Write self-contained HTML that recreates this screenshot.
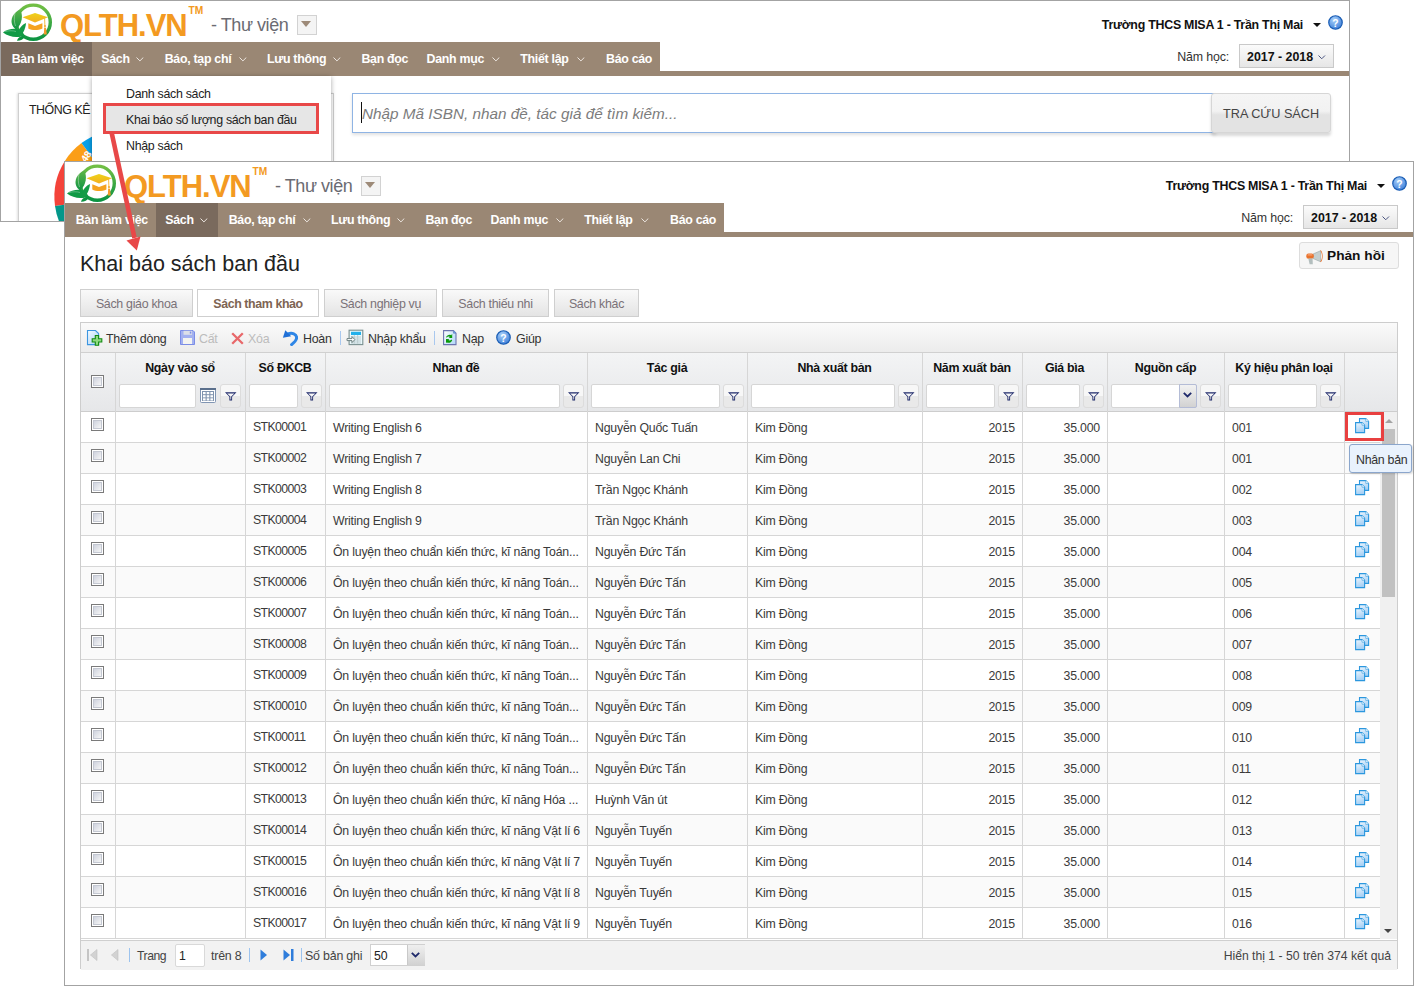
<!DOCTYPE html><html><head><meta charset="utf-8"><style>
html,body{margin:0;padding:0;background:#fff;width:1418px;height:991px;overflow:hidden;position:relative;font-family:'Liberation Sans', sans-serif}
div,span{box-sizing:content-box}
</style></head><body>
<div style="position:absolute;left:0;top:0;width:1348px;height:220px;border:1px solid #a3a3a3;background:#fff;overflow:hidden">
<div style="position:absolute;left:-1px;top:-1px;width:1350px;height:300px">
<svg width="60" height="45" viewBox="0 0 60 45" style="position:absolute;left:0;top:0">
<defs>
<linearGradient id="gr" x1="0" y1="0" x2="0" y2="1"><stop offset="0" stop-color="#72bf44"/><stop offset="1" stop-color="#0c9443"/></linearGradient>
<linearGradient id="gl" x1="0" y1="0" x2="0" y2="1"><stop offset="0" stop-color="#5db548"/><stop offset="1" stop-color="#0f9444"/></linearGradient>
<linearGradient id="gc" x1="0" y1="0" x2="0" y2="1"><stop offset="0" stop-color="#eed21a"/><stop offset="1" stop-color="#f4ae1e"/></linearGradient>
</defs>
<circle cx="33.25" cy="22.15" r="17.05" fill="none" stroke="url(#gr)" stroke-width="3.4"/>
<path d="M19.8 9.5 C 23.5 14, 22.5 24, 16 29.5 C 9.5 25, 9.5 15, 19.8 9.5 Z" fill="url(#gl)"/>
<path d="M3 32.5 C 8 28.5, 17 27.5, 22.5 31 L 24 35.5 C 17 38.5, 9 37, 3 32.5 Z" fill="#109a45"/>
<path d="M26 23 C 25.5 29, 23 34, 19 37 C 17 33, 19 26, 26 23 Z" fill="#139b46"/>
<path d="M17 40.8 C 17.5 37.5, 21 35.5, 25 36.5 C 23.5 39.5, 20 41, 17 40.8 Z" fill="#0c9240"/>
<path d="M15 13 C 14 17, 14 22, 15.5 26" stroke="#ffffff" stroke-opacity="0.7" stroke-width="0.5" fill="none"/>
<path d="M5 31.5 C 9 30.5, 13 30.5, 16 31.5" stroke="#ffffff" stroke-opacity="0.6" stroke-width="0.5" fill="none"/>
<path d="M22.5 17.3 L35 13 L48 17.3 L35 22.5 Z" fill="url(#gc)"/>
<path d="M28.3 23.2 L35 26 L42.4 23.2 L42.4 28.5 C 38 30.5, 32 30.5, 28.3 28.5 Z" fill="#f5a21f"/>
<path d="M44.6 18 L45 29" stroke="#f2b431" stroke-width="0.9"/>
<circle cx="45" cy="26" r="0.9" fill="#f2a42a"/>
<path d="M44.2 28 L46 28 L46.8 34.5 L43.8 34.5 Z" fill="#f39a2a"/>
</svg>
<div style="position:absolute;left:60px;top:9.7px;font:bold 31px/31px 'Liberation Sans', sans-serif;color:#f39a22;letter-spacing:-1px">QLTH.VN</div>
<div style="position:absolute;left:188.5px;top:6px;font:bold 10.2px/10px 'Liberation Sans', sans-serif;color:#f39a22">TM</div>
<div style="position:absolute;left:211px;top:17px;font:18px/17px 'Liberation Sans', sans-serif;color:#6b6b72;letter-spacing:-0.45px;white-space:nowrap">- Thư viện</div>
<div style="position:absolute;left:297px;top:15px;width:18px;height:18px;border:1px solid #d2d2d2;background:#f4f4f4"></div>
<div style="position:absolute;left:301px;top:21px;width:0;height:0;border-left:5.7px solid transparent;border-right:5.7px solid transparent;border-top:6.5px solid #9d8a78"></div>
<div style="position:absolute;right:47px;top:19px;font:bold 12.4px/12px 'Liberation Sans', sans-serif;color:#111;letter-spacing:-0.25px;white-space:nowrap">Trường THCS MISA 1 - Trần Thị Mai</div>
<div style="position:absolute;left:1313px;top:23px;width:0;height:0;border-left:4px solid transparent;border-right:4px solid transparent;border-top:4px solid #111"></div>
<svg width="15" height="15" viewBox="0 0 16 16" style="position:absolute;left:1328px;top:15px">
<defs><radialGradient id="hg132815" cx="0.4" cy="0.3" r="0.8"><stop offset="0" stop-color="#a8d0fa"/><stop offset="1" stop-color="#3478d6"/></radialGradient></defs>
<circle cx="8" cy="8" r="7.2" fill="url(#hg132815)" stroke="#1a5db4" stroke-width="1.3"/>
<text x="8" y="12.3" text-anchor="middle" font-family="Liberation Sans" font-weight="bold" font-size="11" fill="#fff">?</text>
</svg>
<div style="position:absolute;right:121px;top:51px;font:12.4px/12px 'Liberation Sans', sans-serif;color:#333;white-space:nowrap;letter-spacing:-0.15px">Năm học:</div>
<div style="position:absolute;left:1239px;top:44px;width:93px;height:22px;border:1px solid #c9c9c9;background:linear-gradient(#fbfbfb,#e6e6e6)"></div>
<div style="position:absolute;left:1247px;top:51px;font:bold 12.4px/12px 'Liberation Sans', sans-serif;color:#111;white-space:nowrap">2017 - 2018</div>
<svg width="8" height="5" style="position:absolute;left:1318px;top:55px"><path d="M0.5 0.5 L3.75 3.75 L7 0.5" fill="none" stroke="#4a5580" stroke-width="1"/></svg>
<div style="position:absolute;left:1px;top:71px;width:1348px;height:5px;background:#9a8774"></div>
<div style="position:absolute;left:1px;top:42px;width:659px;height:34px;background:#9a8774"></div>
<div style="position:absolute;left:1px;top:42px;width:91px;height:34px;background:#7a6a5d"></div>
<div style="position:absolute;left:11.7px;top:53px;font:bold 12.4px/12px 'Liberation Sans', sans-serif;color:#fff;letter-spacing:-0.3px;white-space:nowrap">Bàn làm việc</div>
<div style="position:absolute;left:101.3px;top:53px;font:bold 12.4px/12px 'Liberation Sans', sans-serif;color:#fff;letter-spacing:-0.3px;white-space:nowrap">Sách</div>
<svg width="8" height="5" style="position:absolute;left:136px;top:57px"><path d="M0.5 0.5 L3.9 3.9 L7.3 0.5" fill="none" stroke="#ece6e0" stroke-width="1"/></svg>
<div style="position:absolute;left:164.7px;top:53px;font:bold 12.4px/12px 'Liberation Sans', sans-serif;color:#fff;letter-spacing:-0.3px;white-space:nowrap">Báo, tạp chí</div>
<svg width="8" height="5" style="position:absolute;left:238.7px;top:57px"><path d="M0.5 0.5 L3.9 3.9 L7.3 0.5" fill="none" stroke="#ece6e0" stroke-width="1"/></svg>
<div style="position:absolute;left:267px;top:53px;font:bold 12.4px/12px 'Liberation Sans', sans-serif;color:#fff;letter-spacing:-0.3px;white-space:nowrap">Lưu thông</div>
<svg width="8" height="5" style="position:absolute;left:333px;top:57px"><path d="M0.5 0.5 L3.9 3.9 L7.3 0.5" fill="none" stroke="#ece6e0" stroke-width="1"/></svg>
<div style="position:absolute;left:361.4px;top:53px;font:bold 12.4px/12px 'Liberation Sans', sans-serif;color:#fff;letter-spacing:-0.3px;white-space:nowrap">Bạn đọc</div>
<div style="position:absolute;left:426.6px;top:53px;font:bold 12.4px/12px 'Liberation Sans', sans-serif;color:#fff;letter-spacing:-0.3px;white-space:nowrap">Danh mục</div>
<svg width="8" height="5" style="position:absolute;left:492px;top:57px"><path d="M0.5 0.5 L3.9 3.9 L7.3 0.5" fill="none" stroke="#ece6e0" stroke-width="1"/></svg>
<div style="position:absolute;left:520.3px;top:53px;font:bold 12.4px/12px 'Liberation Sans', sans-serif;color:#fff;letter-spacing:-0.3px;white-space:nowrap">Thiết lập</div>
<svg width="8" height="5" style="position:absolute;left:577px;top:57px"><path d="M0.5 0.5 L3.9 3.9 L7.3 0.5" fill="none" stroke="#ece6e0" stroke-width="1"/></svg>
<div style="position:absolute;left:606px;top:53px;font:bold 12.4px/12px 'Liberation Sans', sans-serif;color:#fff;letter-spacing:-0.3px;white-space:nowrap">Báo cáo</div>
<div style="position:absolute;left:18px;top:93px;width:314px;height:200px;border:1px solid #cfcfcf;box-shadow:-1px 0 2px rgba(0,0,0,0.12)"></div>
<div style="position:absolute;left:29px;top:104px;font:12.4px/12px 'Liberation Sans', sans-serif;color:#222;letter-spacing:-0.45px;white-space:nowrap">THỐNG KÊ</div>
<svg width="400" height="300" style="position:absolute;left:0;top:0"><path d="M121.3 196.9 L55.02 205.98 A66.9 66.9 0 0 1 64.88 160.95 Z" fill="#f4433a"/><path d="M121.3 196.9 L64.88 160.95 A66.9 66.9 0 0 1 81.51 143.12 Z" fill="#fb9e17"/><path d="M121.3 196.9 L81.51 143.12 A66.9 66.9 0 0 1 172.55 153.90 Z" fill="#08a0e8"/><path d="M121.3 196.9 L109.68 262.78 A66.9 66.9 0 0 1 55.02 205.98 Z" fill="#03978a"/><text x="0" y="0" transform="translate(86 163) rotate(-56)" font-family="Liberation Sans" font-weight="bold" font-size="10" fill="#fff">48</text></svg>
<div style="position:absolute;left:92px;top:76px;width:239px;height:150px;background:#fff;box-shadow:0 1px 5px rgba(0,0,0,0.35)"></div>
<div style="position:absolute;left:126px;top:88px;font:12.4px/12px 'Liberation Sans', sans-serif;color:#222;letter-spacing:-0.3px;white-space:nowrap">Danh sách sách</div>
<div style="position:absolute;left:103px;top:103px;width:210px;height:25px;border:3px solid #e84848;background:#e6e6e6"></div>
<div style="position:absolute;left:126px;top:114px;font:12.4px/12px 'Liberation Sans', sans-serif;color:#222;letter-spacing:-0.3px;white-space:nowrap">Khai báo số lượng sách ban đầu</div>
<div style="position:absolute;left:126px;top:140px;font:12.4px/12px 'Liberation Sans', sans-serif;color:#222;letter-spacing:-0.3px;white-space:nowrap">Nhập sách</div>
<div style="position:absolute;left:352px;top:93px;width:862px;height:38px;border:1px solid #8fb4e4;background:#fff;box-shadow:0 2px 3px rgba(0,0,0,0.12)"></div>
<div style="position:absolute;left:361px;top:102px;width:1px;height:21px;background:#111"></div>
<div style="position:absolute;left:362px;top:106px;font:italic 15.3px/16px 'Liberation Sans', sans-serif;color:#7c7c7c;white-space:nowrap">Nhập Mã ISBN, nhan đề, tác giả để tìm kiếm...</div>
<div style="position:absolute;left:1211px;top:93px;width:118px;height:38px;border:1px solid #d6d6d6;border-radius:3px;background:linear-gradient(#f5f5f5 0,#f2f2f2 45%,#e3e3e3 55%,#e3e3e3 100%);box-shadow:0 3px 3px rgba(0,0,0,0.15)"></div>
<div style="position:absolute;left:1223px;top:107px;font:12.7px/14px 'Liberation Sans', sans-serif;color:#444;white-space:nowrap">TRA CỨU SÁCH</div>
</div></div>
<div style="position:absolute;left:64px;top:161px;width:1348px;height:823px;border:1px solid #a3a3a3;background:#fff;overflow:hidden">
<div style="position:absolute;left:-1px;top:-1px;width:1350px;height:826px">
<svg width="60" height="45" viewBox="0 0 60 45" style="position:absolute;left:0;top:0">
<defs>
<linearGradient id="gr" x1="0" y1="0" x2="0" y2="1"><stop offset="0" stop-color="#72bf44"/><stop offset="1" stop-color="#0c9443"/></linearGradient>
<linearGradient id="gl" x1="0" y1="0" x2="0" y2="1"><stop offset="0" stop-color="#5db548"/><stop offset="1" stop-color="#0f9444"/></linearGradient>
<linearGradient id="gc" x1="0" y1="0" x2="0" y2="1"><stop offset="0" stop-color="#eed21a"/><stop offset="1" stop-color="#f4ae1e"/></linearGradient>
</defs>
<circle cx="33.25" cy="22.15" r="17.05" fill="none" stroke="url(#gr)" stroke-width="3.4"/>
<path d="M19.8 9.5 C 23.5 14, 22.5 24, 16 29.5 C 9.5 25, 9.5 15, 19.8 9.5 Z" fill="url(#gl)"/>
<path d="M3 32.5 C 8 28.5, 17 27.5, 22.5 31 L 24 35.5 C 17 38.5, 9 37, 3 32.5 Z" fill="#109a45"/>
<path d="M26 23 C 25.5 29, 23 34, 19 37 C 17 33, 19 26, 26 23 Z" fill="#139b46"/>
<path d="M17 40.8 C 17.5 37.5, 21 35.5, 25 36.5 C 23.5 39.5, 20 41, 17 40.8 Z" fill="#0c9240"/>
<path d="M15 13 C 14 17, 14 22, 15.5 26" stroke="#ffffff" stroke-opacity="0.7" stroke-width="0.5" fill="none"/>
<path d="M5 31.5 C 9 30.5, 13 30.5, 16 31.5" stroke="#ffffff" stroke-opacity="0.6" stroke-width="0.5" fill="none"/>
<path d="M22.5 17.3 L35 13 L48 17.3 L35 22.5 Z" fill="url(#gc)"/>
<path d="M28.3 23.2 L35 26 L42.4 23.2 L42.4 28.5 C 38 30.5, 32 30.5, 28.3 28.5 Z" fill="#f5a21f"/>
<path d="M44.6 18 L45 29" stroke="#f2b431" stroke-width="0.9"/>
<circle cx="45" cy="26" r="0.9" fill="#f2a42a"/>
<path d="M44.2 28 L46 28 L46.8 34.5 L43.8 34.5 Z" fill="#f39a2a"/>
</svg>
<div style="position:absolute;left:60px;top:9.7px;font:bold 31px/31px 'Liberation Sans', sans-serif;color:#f39a22;letter-spacing:-1px">QLTH.VN</div>
<div style="position:absolute;left:188.5px;top:6px;font:bold 10.2px/10px 'Liberation Sans', sans-serif;color:#f39a22">TM</div>
<div style="position:absolute;left:211px;top:17px;font:18px/17px 'Liberation Sans', sans-serif;color:#6b6b72;letter-spacing:-0.45px;white-space:nowrap">- Thư viện</div>
<div style="position:absolute;left:297px;top:15px;width:18px;height:18px;border:1px solid #d2d2d2;background:#f4f4f4"></div>
<div style="position:absolute;left:301px;top:21px;width:0;height:0;border-left:5.7px solid transparent;border-right:5.7px solid transparent;border-top:6.5px solid #9d8a78"></div>
<div style="position:absolute;right:47px;top:19px;font:bold 12.4px/12px 'Liberation Sans', sans-serif;color:#111;letter-spacing:-0.25px;white-space:nowrap">Trường THCS MISA 1 - Trần Thị Mai</div>
<div style="position:absolute;left:1313px;top:23px;width:0;height:0;border-left:4px solid transparent;border-right:4px solid transparent;border-top:4px solid #111"></div>
<svg width="15" height="15" viewBox="0 0 16 16" style="position:absolute;left:1328px;top:15px">
<defs><radialGradient id="hg132815" cx="0.4" cy="0.3" r="0.8"><stop offset="0" stop-color="#a8d0fa"/><stop offset="1" stop-color="#3478d6"/></radialGradient></defs>
<circle cx="8" cy="8" r="7.2" fill="url(#hg132815)" stroke="#1a5db4" stroke-width="1.3"/>
<text x="8" y="12.3" text-anchor="middle" font-family="Liberation Sans" font-weight="bold" font-size="11" fill="#fff">?</text>
</svg>
<div style="position:absolute;right:121px;top:51px;font:12.4px/12px 'Liberation Sans', sans-serif;color:#333;white-space:nowrap;letter-spacing:-0.15px">Năm học:</div>
<div style="position:absolute;left:1239px;top:44px;width:93px;height:22px;border:1px solid #c9c9c9;background:linear-gradient(#fbfbfb,#e6e6e6)"></div>
<div style="position:absolute;left:1247px;top:51px;font:bold 12.4px/12px 'Liberation Sans', sans-serif;color:#111;white-space:nowrap">2017 - 2018</div>
<svg width="8" height="5" style="position:absolute;left:1318px;top:55px"><path d="M0.5 0.5 L3.75 3.75 L7 0.5" fill="none" stroke="#4a5580" stroke-width="1"/></svg>
<div style="position:absolute;left:1px;top:71px;width:1348px;height:5px;background:#9a8774"></div>
<div style="position:absolute;left:1px;top:42px;width:659px;height:34px;background:#9a8774"></div>
<div style="position:absolute;left:92px;top:42px;width:62px;height:34px;background:#7a6a5d"></div>
<div style="position:absolute;left:11.7px;top:53px;font:bold 12.4px/12px 'Liberation Sans', sans-serif;color:#fff;letter-spacing:-0.3px;white-space:nowrap">Bàn làm việc</div>
<div style="position:absolute;left:101.3px;top:53px;font:bold 12.4px/12px 'Liberation Sans', sans-serif;color:#fff;letter-spacing:-0.3px;white-space:nowrap">Sách</div>
<svg width="8" height="5" style="position:absolute;left:136px;top:57px"><path d="M0.5 0.5 L3.9 3.9 L7.3 0.5" fill="none" stroke="#ece6e0" stroke-width="1"/></svg>
<div style="position:absolute;left:164.7px;top:53px;font:bold 12.4px/12px 'Liberation Sans', sans-serif;color:#fff;letter-spacing:-0.3px;white-space:nowrap">Báo, tạp chí</div>
<svg width="8" height="5" style="position:absolute;left:238.7px;top:57px"><path d="M0.5 0.5 L3.9 3.9 L7.3 0.5" fill="none" stroke="#ece6e0" stroke-width="1"/></svg>
<div style="position:absolute;left:267px;top:53px;font:bold 12.4px/12px 'Liberation Sans', sans-serif;color:#fff;letter-spacing:-0.3px;white-space:nowrap">Lưu thông</div>
<svg width="8" height="5" style="position:absolute;left:333px;top:57px"><path d="M0.5 0.5 L3.9 3.9 L7.3 0.5" fill="none" stroke="#ece6e0" stroke-width="1"/></svg>
<div style="position:absolute;left:361.4px;top:53px;font:bold 12.4px/12px 'Liberation Sans', sans-serif;color:#fff;letter-spacing:-0.3px;white-space:nowrap">Bạn đọc</div>
<div style="position:absolute;left:426.6px;top:53px;font:bold 12.4px/12px 'Liberation Sans', sans-serif;color:#fff;letter-spacing:-0.3px;white-space:nowrap">Danh mục</div>
<svg width="8" height="5" style="position:absolute;left:492px;top:57px"><path d="M0.5 0.5 L3.9 3.9 L7.3 0.5" fill="none" stroke="#ece6e0" stroke-width="1"/></svg>
<div style="position:absolute;left:520.3px;top:53px;font:bold 12.4px/12px 'Liberation Sans', sans-serif;color:#fff;letter-spacing:-0.3px;white-space:nowrap">Thiết lập</div>
<svg width="8" height="5" style="position:absolute;left:577px;top:57px"><path d="M0.5 0.5 L3.9 3.9 L7.3 0.5" fill="none" stroke="#ece6e0" stroke-width="1"/></svg>
<div style="position:absolute;left:606px;top:53px;font:bold 12.4px/12px 'Liberation Sans', sans-serif;color:#fff;letter-spacing:-0.3px;white-space:nowrap">Báo cáo</div>
</div></div>
<div style="position:absolute;left:80px;top:254px;font:21.5px/21px 'Liberation Sans', sans-serif;color:#222;white-space:nowrap">Khai báo sách ban đầu</div>
<div style="position:absolute;left:1299px;top:242px;width:98px;height:25px;border:1px solid #dddddd;border-radius:3px;background:#f6f6f6"></div>
<svg width="17" height="15" viewBox="0 0 17 15" style="position:absolute;left:1306px;top:250px">
<path d="M7 4 L14.5 0.8 L14.5 11.7 L7 8.5 Z" fill="#c5cfcf" stroke="#98a6a6" stroke-width="0.6"/>
<path d="M14 0.6 C16.6 2.5, 16.6 10, 14 11.9 L15 11.9 C17.2 10, 17.2 2.5, 15 0.6 Z" fill="#e8702a"/>
<rect x="0.3" y="3.6" width="7.5" height="5.2" rx="2.2" fill="#e9722c"/>
<rect x="1.5" y="4.2" width="5" height="1.4" rx="0.7" fill="#f7a272"/>
<path d="M2.3 8.4 L3.6 14.2 L6.8 14.2 L6.6 8.4 Z" fill="#b3bebe"/>
</svg>
<div style="position:absolute;left:1327px;top:249px;font:bold 13.7px/14px 'Liberation Sans', sans-serif;color:#111;white-space:nowrap">Phản hồi</div>
<div style="position:absolute;left:80px;top:289px;width:111px;height:26px;border:1px solid #cfcfcf;background:linear-gradient(#f9f9f9,#e4e4e4)"></div>
<div style="position:absolute;left:80px;width:113px;top:298px;text-align:center;font:12.4px/12px 'Liberation Sans', sans-serif;color:#7a7278;letter-spacing:-0.3px;white-space:nowrap">Sách giáo khoa</div>
<div style="position:absolute;left:197px;top:289px;width:120px;height:26px;border:1px solid #cfcfcf;background:#fff"></div>
<div style="position:absolute;left:197px;width:122px;top:298px;text-align:center;font:bold 12.4px/12px 'Liberation Sans', sans-serif;color:#7d6453;letter-spacing:-0.4px;white-space:nowrap">Sách tham khảo</div>
<div style="position:absolute;left:324px;top:289px;width:111px;height:26px;border:1px solid #cfcfcf;background:linear-gradient(#f9f9f9,#e4e4e4)"></div>
<div style="position:absolute;left:324px;width:113px;top:298px;text-align:center;font:12.4px/12px 'Liberation Sans', sans-serif;color:#7a7278;letter-spacing:-0.3px;white-space:nowrap">Sách nghiệp vụ</div>
<div style="position:absolute;left:442px;top:289px;width:105px;height:26px;border:1px solid #cfcfcf;background:linear-gradient(#f9f9f9,#e4e4e4)"></div>
<div style="position:absolute;left:442px;width:107px;top:298px;text-align:center;font:12.4px/12px 'Liberation Sans', sans-serif;color:#7a7278;letter-spacing:-0.3px;white-space:nowrap">Sách thiếu nhi</div>
<div style="position:absolute;left:554px;top:289px;width:83px;height:26px;border:1px solid #cfcfcf;background:linear-gradient(#f9f9f9,#e4e4e4)"></div>
<div style="position:absolute;left:554px;width:85px;top:298px;text-align:center;font:12.4px/12px 'Liberation Sans', sans-serif;color:#7a7278;letter-spacing:-0.3px;white-space:nowrap">Sách khác</div>
<div style="position:absolute;left:80px;top:322px;width:1316px;height:646px;border:1px solid #cdcdcd;border-bottom:none;background:#fff"></div>
<div style="position:absolute;left:81px;top:323px;width:1316px;height:29px;background:linear-gradient(#fafafa,#ececec);border-bottom:1px solid #d0d0d0"></div>
<svg width="22" height="22" viewBox="0 0 22 22" style="position:absolute;left:84px;top:326px">
<defs><linearGradient id="pg1" x1="0" y1="0" x2="1" y2="1"><stop offset="0" stop-color="#f4fbff"/><stop offset="1" stop-color="#a9d2f6"/></linearGradient></defs>
<path d="M3.5 4.5 H11.5 L14.6 7.6 V18.6 H3.5 Z" fill="url(#pg1)" stroke="#3d96e0" stroke-width="1.1"/>
<path d="M11.3 9.5 H14.6 V12.8 H17.8 V16 H14.6 V19.2 H11.3 V16 H8.2 V12.8 H11.3 Z" fill="#8edb80" stroke="#138a13" stroke-width="1.1"/>
</svg>
<div style="position:absolute;left:106px;top:333px;font:12.4px/12px 'Liberation Sans', sans-serif;color:#333;letter-spacing:-0.25px;white-space:nowrap">Thêm dòng</div>
<svg width="16" height="16" viewBox="0 0 16 16" style="position:absolute;left:180px;top:330px">
<path d="M0.5 0.5 H13 L14.5 2 V14.5 H0.5 Z" fill="#a3b1f0" stroke="#7b8de6" stroke-width="1"/>
<rect x="3.5" y="0.8" width="8.5" height="4" fill="#dcdfe8"/>
<rect x="9.8" y="1.6" width="1.5" height="2" fill="#7b8de6"/>
<rect x="3" y="8" width="9" height="6" fill="#f4f4f0"/>
</svg>
<div style="position:absolute;left:199px;top:333px;font:12.4px/12px 'Liberation Sans', sans-serif;color:#bcbcbc;letter-spacing:-0.25px;white-space:nowrap">Cất</div>
<svg width="13" height="13" style="position:absolute;left:231px;top:332px"><path d="M1.2 1.2 L11.8 11.8 M11.8 1.2 L1.2 11.8" stroke="#e8686a" stroke-width="2.3"/></svg>
<div style="position:absolute;left:248px;top:333px;font:12.4px/12px 'Liberation Sans', sans-serif;color:#bcbcbc;letter-spacing:-0.25px;white-space:nowrap">Xóa</div>
<svg width="16" height="16" viewBox="0 0 16 16" style="position:absolute;left:282px;top:330px"><path d="M5.5 4.2 C 10 2.2, 14.8 4, 14.6 8 C 14.4 10.5, 12 12.6, 9.6 14.6" fill="none" stroke="#2f86e6" stroke-width="3" stroke-linecap="round"/><path d="M3.3 0.3 L0.9 7.8 L9.2 6.3 Z" fill="#1f6fd6"/></svg>
<div style="position:absolute;left:303px;top:333px;font:12.4px/12px 'Liberation Sans', sans-serif;color:#333;letter-spacing:-0.25px;white-space:nowrap">Hoàn</div>
<div style="position:absolute;left:340px;top:331px;width:1px;height:14px;background:#a9c8ee"></div>
<svg width="22" height="22" viewBox="0 0 22 22" style="position:absolute;left:344px;top:326px">
<rect x="5.1" y="4.2" width="13.7" height="14.4" fill="#eaf8fb" stroke="#7a9090" stroke-width="1.1"/>
<rect x="7" y="5.8" width="10" height="3.2" fill="#22b0ea"/>
<path d="M7 11 H17 M7 13 H17 M7 15 H17 M7 17 H17 M10.3 9 V17.5 M13.7 9 V17.5" stroke="#b8c8cc" stroke-width="0.9"/>
<path d="M3 12.6 H8 V10.6 L10.8 13.6 L8 16.6 V14.6 H3 Z" fill="#ffffff" stroke="#6e8282" stroke-width="1"/>
</svg>
<div style="position:absolute;left:368px;top:333px;font:12.4px/12px 'Liberation Sans', sans-serif;color:#333;letter-spacing:-0.25px;white-space:nowrap">Nhập khẩu</div>
<div style="position:absolute;left:434px;top:331px;width:1px;height:14px;background:#a9c8ee"></div>
<svg width="22" height="22" viewBox="0 0 22 22" style="position:absolute;left:440px;top:326px">
<defs><linearGradient id="pg2" x1="0" y1="0" x2="1" y2="0.6"><stop offset="0" stop-color="#ffffff"/><stop offset="1" stop-color="#b9dcf8"/></linearGradient></defs>
<path d="M3.6 4.6 H13.4 L16 7.2 V18.6 H3.6 Z" fill="url(#pg2)" stroke="#6b74b0" stroke-width="1.1"/>
<path d="M13.4 4.6 V7.2 H16" fill="#58a8ee" stroke="#6b74b0" stroke-width="0.6"/>
<path d="M6 11.3 C 6.8 8.8, 10 8, 11.6 9.2 L11.8 8 H12.2 V12 H8.8 L9.8 11 C 9 10.3, 7.4 10.4, 6.8 11.6 Z" fill="#0a9a0a"/>
<path d="M12.2 14.2 C 11.5 16.6, 8.4 17.4, 6.6 16.2 L6.4 17 H6 V13 H9.4 L8.4 14 C 9.2 14.8, 10.8 14.6, 11.4 13.6 Z" fill="#0a9a0a"/>
</svg>
<div style="position:absolute;left:462px;top:333px;font:12.4px/12px 'Liberation Sans', sans-serif;color:#333;letter-spacing:-0.25px;white-space:nowrap">Nạp</div>
<svg width="15" height="15" viewBox="0 0 16 16" style="position:absolute;left:496px;top:330px">
<defs><radialGradient id="hg496330" cx="0.4" cy="0.3" r="0.8"><stop offset="0" stop-color="#a8d0fa"/><stop offset="1" stop-color="#3478d6"/></radialGradient></defs>
<circle cx="8" cy="8" r="7.2" fill="url(#hg496330)" stroke="#1a5db4" stroke-width="1.3"/>
<text x="8" y="12.3" text-anchor="middle" font-family="Liberation Sans" font-weight="bold" font-size="11" fill="#fff">?</text>
</svg>
<div style="position:absolute;left:516px;top:333px;font:12.4px/12px 'Liberation Sans', sans-serif;color:#333;letter-spacing:-0.25px;white-space:nowrap">Giúp</div>
<div style="position:absolute;left:81px;top:353px;width:1316px;height:58px;background:linear-gradient(#f3f4f5,#e6e7e9);border-bottom:1px solid #cdcdcd"></div>
<div style="position:absolute;left:115px;width:130px;top:362px;text-align:center;font:bold 12.4px/12px 'Liberation Sans', sans-serif;color:#111;letter-spacing:-0.3px;white-space:nowrap">Ngày vào sổ</div>
<div style="position:absolute;left:245px;width:80px;top:362px;text-align:center;font:bold 12.4px/12px 'Liberation Sans', sans-serif;color:#111;letter-spacing:-0.3px;white-space:nowrap">Số ĐKCB</div>
<div style="position:absolute;left:325px;width:262px;top:362px;text-align:center;font:bold 12.4px/12px 'Liberation Sans', sans-serif;color:#111;letter-spacing:-0.3px;white-space:nowrap">Nhan đề</div>
<div style="position:absolute;left:587px;width:160px;top:362px;text-align:center;font:bold 12.4px/12px 'Liberation Sans', sans-serif;color:#111;letter-spacing:-0.3px;white-space:nowrap">Tác giả</div>
<div style="position:absolute;left:747px;width:175px;top:362px;text-align:center;font:bold 12.4px/12px 'Liberation Sans', sans-serif;color:#111;letter-spacing:-0.3px;white-space:nowrap">Nhà xuất bản</div>
<div style="position:absolute;left:922px;width:100px;top:362px;text-align:center;font:bold 12.4px/12px 'Liberation Sans', sans-serif;color:#111;letter-spacing:-0.3px;white-space:nowrap">Năm xuất bản</div>
<div style="position:absolute;left:1022px;width:85px;top:362px;text-align:center;font:bold 12.4px/12px 'Liberation Sans', sans-serif;color:#111;letter-spacing:-0.3px;white-space:nowrap">Giá bìa</div>
<div style="position:absolute;left:1107px;width:117px;top:362px;text-align:center;font:bold 12.4px/12px 'Liberation Sans', sans-serif;color:#111;letter-spacing:-0.3px;white-space:nowrap">Nguồn cấp</div>
<div style="position:absolute;left:1224px;width:120px;top:362px;text-align:center;font:bold 12.4px/12px 'Liberation Sans', sans-serif;color:#111;letter-spacing:-0.3px;white-space:nowrap">Ký hiệu phân loại</div>
<div style="position:absolute;left:115px;top:353px;width:1px;height:585px;background:#d6d6d6"></div>
<div style="position:absolute;left:245px;top:353px;width:1px;height:585px;background:#d6d6d6"></div>
<div style="position:absolute;left:325px;top:353px;width:1px;height:585px;background:#d6d6d6"></div>
<div style="position:absolute;left:587px;top:353px;width:1px;height:585px;background:#d6d6d6"></div>
<div style="position:absolute;left:747px;top:353px;width:1px;height:585px;background:#d6d6d6"></div>
<div style="position:absolute;left:922px;top:353px;width:1px;height:585px;background:#d6d6d6"></div>
<div style="position:absolute;left:1022px;top:353px;width:1px;height:585px;background:#d6d6d6"></div>
<div style="position:absolute;left:1107px;top:353px;width:1px;height:585px;background:#d6d6d6"></div>
<div style="position:absolute;left:1224px;top:353px;width:1px;height:585px;background:#d6d6d6"></div>
<div style="position:absolute;left:1344px;top:353px;width:1px;height:585px;background:#d6d6d6"></div>
<div style="position:absolute;left:91px;top:375px;width:11px;height:11px;border:1px solid #7a7a7a;background:#fff"><div style="position:absolute;left:1px;top:1px;width:7px;height:7px;border:1px solid #c4c8d2;background:linear-gradient(135deg,#cfd3de,#f6f6f6)"></div></div>
<div style="position:absolute;left:119px;top:384px;width:75px;height:22px;border:1px solid #d6d6d6;border-radius:2px;background:#fff"></div>
<svg width="16" height="15" viewBox="0 0 16 15" style="position:absolute;left:200px;top:388px"><rect x="0.5" y="0.5" width="15" height="14" rx="1" fill="#fff" stroke="#8095b3"/><rect x="0" y="0" width="16" height="2" fill="#5a6f8c"/><rect x="2" y="3" width="12" height="10" fill="#7f93ae"/><g fill="#fff"><rect x="3" y="4" width="2.6" height="2.2"/><rect x="6.7" y="4" width="2.6" height="2.2"/><rect x="10.4" y="4" width="2.6" height="2.2"/><rect x="3" y="7.2" width="2.6" height="2.2"/><rect x="6.7" y="7.2" width="2.6" height="2.2"/><rect x="10.4" y="7.2" width="2.6" height="2.2"/><rect x="3" y="10.3" width="2.6" height="2.2"/><rect x="6.7" y="10.3" width="2.6" height="2.2"/><rect x="10.4" y="10.3" width="2.6" height="2.2"/></g></svg>
<div style="position:absolute;left:220px;top:384px;width:19px;height:22px;border:1px solid #dcdcdc;border-radius:3px;background:linear-gradient(#f7f7f7 0,#f7f7f7 50%,#e9e9e9 50%,#e9e9e9 100%)"></div>
<svg width="12" height="10" viewBox="0 0 12 10" style="position:absolute;left:225px;top:391.6px"><path d="M0 0.3 H11.5 L7.1 4.8 V8.6 H4.4 V4.8 Z M2.1 1.4 L5.3 4.4 V7.5 H6.2 V4.4 L9.4 1.4 Z" fill="#1f2a6b" fill-rule="evenodd"/></svg>
<div style="position:absolute;left:249px;top:384px;width:47px;height:22px;border:1px solid #d6d6d6;border-radius:2px;background:#fff"></div>
<div style="position:absolute;left:301px;top:384px;width:19px;height:22px;border:1px solid #dcdcdc;border-radius:3px;background:linear-gradient(#f7f7f7 0,#f7f7f7 50%,#e9e9e9 50%,#e9e9e9 100%)"></div>
<svg width="12" height="10" viewBox="0 0 12 10" style="position:absolute;left:306px;top:391.6px"><path d="M0 0.3 H11.5 L7.1 4.8 V8.6 H4.4 V4.8 Z M2.1 1.4 L5.3 4.4 V7.5 H6.2 V4.4 L9.4 1.4 Z" fill="#1f2a6b" fill-rule="evenodd"/></svg>
<div style="position:absolute;left:329px;top:384px;width:229px;height:22px;border:1px solid #d6d6d6;border-radius:2px;background:#fff"></div>
<div style="position:absolute;left:563px;top:384px;width:19px;height:22px;border:1px solid #dcdcdc;border-radius:3px;background:linear-gradient(#f7f7f7 0,#f7f7f7 50%,#e9e9e9 50%,#e9e9e9 100%)"></div>
<svg width="12" height="10" viewBox="0 0 12 10" style="position:absolute;left:568px;top:391.6px"><path d="M0 0.3 H11.5 L7.1 4.8 V8.6 H4.4 V4.8 Z M2.1 1.4 L5.3 4.4 V7.5 H6.2 V4.4 L9.4 1.4 Z" fill="#1f2a6b" fill-rule="evenodd"/></svg>
<div style="position:absolute;left:591px;top:384px;width:127px;height:22px;border:1px solid #d6d6d6;border-radius:2px;background:#fff"></div>
<div style="position:absolute;left:723px;top:384px;width:19px;height:22px;border:1px solid #dcdcdc;border-radius:3px;background:linear-gradient(#f7f7f7 0,#f7f7f7 50%,#e9e9e9 50%,#e9e9e9 100%)"></div>
<svg width="12" height="10" viewBox="0 0 12 10" style="position:absolute;left:728px;top:391.6px"><path d="M0 0.3 H11.5 L7.1 4.8 V8.6 H4.4 V4.8 Z M2.1 1.4 L5.3 4.4 V7.5 H6.2 V4.4 L9.4 1.4 Z" fill="#1f2a6b" fill-rule="evenodd"/></svg>
<div style="position:absolute;left:751px;top:384px;width:142px;height:22px;border:1px solid #d6d6d6;border-radius:2px;background:#fff"></div>
<div style="position:absolute;left:898px;top:384px;width:19px;height:22px;border:1px solid #dcdcdc;border-radius:3px;background:linear-gradient(#f7f7f7 0,#f7f7f7 50%,#e9e9e9 50%,#e9e9e9 100%)"></div>
<svg width="12" height="10" viewBox="0 0 12 10" style="position:absolute;left:903px;top:391.6px"><path d="M0 0.3 H11.5 L7.1 4.8 V8.6 H4.4 V4.8 Z M2.1 1.4 L5.3 4.4 V7.5 H6.2 V4.4 L9.4 1.4 Z" fill="#1f2a6b" fill-rule="evenodd"/></svg>
<div style="position:absolute;left:926px;top:384px;width:67px;height:22px;border:1px solid #d6d6d6;border-radius:2px;background:#fff"></div>
<div style="position:absolute;left:998px;top:384px;width:19px;height:22px;border:1px solid #dcdcdc;border-radius:3px;background:linear-gradient(#f7f7f7 0,#f7f7f7 50%,#e9e9e9 50%,#e9e9e9 100%)"></div>
<svg width="12" height="10" viewBox="0 0 12 10" style="position:absolute;left:1003px;top:391.6px"><path d="M0 0.3 H11.5 L7.1 4.8 V8.6 H4.4 V4.8 Z M2.1 1.4 L5.3 4.4 V7.5 H6.2 V4.4 L9.4 1.4 Z" fill="#1f2a6b" fill-rule="evenodd"/></svg>
<div style="position:absolute;left:1026px;top:384px;width:52px;height:22px;border:1px solid #d6d6d6;border-radius:2px;background:#fff"></div>
<div style="position:absolute;left:1083px;top:384px;width:19px;height:22px;border:1px solid #dcdcdc;border-radius:3px;background:linear-gradient(#f7f7f7 0,#f7f7f7 50%,#e9e9e9 50%,#e9e9e9 100%)"></div>
<svg width="12" height="10" viewBox="0 0 12 10" style="position:absolute;left:1088px;top:391.6px"><path d="M0 0.3 H11.5 L7.1 4.8 V8.6 H4.4 V4.8 Z M2.1 1.4 L5.3 4.4 V7.5 H6.2 V4.4 L9.4 1.4 Z" fill="#1f2a6b" fill-rule="evenodd"/></svg>
<div style="position:absolute;left:1111px;top:384px;width:84px;height:22px;border:1px solid #d6d6d6;border-radius:2px;background:#fff"></div>
<div style="position:absolute;left:1179px;top:384px;width:16px;height:22px;background:linear-gradient(#f2f2f2,#d2d2d2);border:1px solid #b4bcd6;border-radius:0 2px 2px 0"></div>
<svg width="9" height="6" style="position:absolute;left:1183px;top:392px"><path d="M0.8 0.8 L4.5 4.5 L8.2 0.8" fill="none" stroke="#1f2a6b" stroke-width="1.8"/></svg>
<div style="position:absolute;left:1200px;top:384px;width:19px;height:22px;border:1px solid #dcdcdc;border-radius:3px;background:linear-gradient(#f7f7f7 0,#f7f7f7 50%,#e9e9e9 50%,#e9e9e9 100%)"></div>
<svg width="12" height="10" viewBox="0 0 12 10" style="position:absolute;left:1205px;top:391.6px"><path d="M0 0.3 H11.5 L7.1 4.8 V8.6 H4.4 V4.8 Z M2.1 1.4 L5.3 4.4 V7.5 H6.2 V4.4 L9.4 1.4 Z" fill="#1f2a6b" fill-rule="evenodd"/></svg>
<div style="position:absolute;left:1228px;top:384px;width:87px;height:22px;border:1px solid #d6d6d6;border-radius:2px;background:#fff"></div>
<div style="position:absolute;left:1320px;top:384px;width:19px;height:22px;border:1px solid #dcdcdc;border-radius:3px;background:linear-gradient(#f7f7f7 0,#f7f7f7 50%,#e9e9e9 50%,#e9e9e9 100%)"></div>
<svg width="12" height="10" viewBox="0 0 12 10" style="position:absolute;left:1325px;top:391.6px"><path d="M0 0.3 H11.5 L7.1 4.8 V8.6 H4.4 V4.8 Z M2.1 1.4 L5.3 4.4 V7.5 H6.2 V4.4 L9.4 1.4 Z" fill="#1f2a6b" fill-rule="evenodd"/></svg>
<div style="position:absolute;left:81px;top:412px;width:1299px;height:527px;overflow:hidden">
<div style="position:absolute;left:0;top:0px;width:1299px;height:30px;background:#fff;border-bottom:1px solid #d6d6d6"></div>
<div style="position:absolute;left:0;top:31px;width:1299px;height:30px;background:#fafafa;border-bottom:1px solid #d6d6d6"></div>
<div style="position:absolute;left:0;top:62px;width:1299px;height:30px;background:#fff;border-bottom:1px solid #d6d6d6"></div>
<div style="position:absolute;left:0;top:93px;width:1299px;height:30px;background:#fafafa;border-bottom:1px solid #d6d6d6"></div>
<div style="position:absolute;left:0;top:124px;width:1299px;height:30px;background:#fff;border-bottom:1px solid #d6d6d6"></div>
<div style="position:absolute;left:0;top:155px;width:1299px;height:30px;background:#fafafa;border-bottom:1px solid #d6d6d6"></div>
<div style="position:absolute;left:0;top:186px;width:1299px;height:30px;background:#fff;border-bottom:1px solid #d6d6d6"></div>
<div style="position:absolute;left:0;top:217px;width:1299px;height:30px;background:#fafafa;border-bottom:1px solid #d6d6d6"></div>
<div style="position:absolute;left:0;top:248px;width:1299px;height:30px;background:#fff;border-bottom:1px solid #d6d6d6"></div>
<div style="position:absolute;left:0;top:279px;width:1299px;height:30px;background:#fafafa;border-bottom:1px solid #d6d6d6"></div>
<div style="position:absolute;left:0;top:310px;width:1299px;height:30px;background:#fff;border-bottom:1px solid #d6d6d6"></div>
<div style="position:absolute;left:0;top:341px;width:1299px;height:30px;background:#fafafa;border-bottom:1px solid #d6d6d6"></div>
<div style="position:absolute;left:0;top:372px;width:1299px;height:30px;background:#fff;border-bottom:1px solid #d6d6d6"></div>
<div style="position:absolute;left:0;top:403px;width:1299px;height:30px;background:#fafafa;border-bottom:1px solid #d6d6d6"></div>
<div style="position:absolute;left:0;top:434px;width:1299px;height:30px;background:#fff;border-bottom:1px solid #d6d6d6"></div>
<div style="position:absolute;left:0;top:465px;width:1299px;height:30px;background:#fafafa;border-bottom:1px solid #d6d6d6"></div>
<div style="position:absolute;left:0;top:496px;width:1299px;height:30px;background:#fff;border-bottom:1px solid #d6d6d6"></div>
</div>
<div style="position:absolute;left:115px;top:411px;width:1px;height:527px;background:#d6d6d6"></div>
<div style="position:absolute;left:245px;top:411px;width:1px;height:527px;background:#d6d6d6"></div>
<div style="position:absolute;left:325px;top:411px;width:1px;height:527px;background:#d6d6d6"></div>
<div style="position:absolute;left:587px;top:411px;width:1px;height:527px;background:#d6d6d6"></div>
<div style="position:absolute;left:747px;top:411px;width:1px;height:527px;background:#d6d6d6"></div>
<div style="position:absolute;left:922px;top:411px;width:1px;height:527px;background:#d6d6d6"></div>
<div style="position:absolute;left:1022px;top:411px;width:1px;height:527px;background:#d6d6d6"></div>
<div style="position:absolute;left:1107px;top:411px;width:1px;height:527px;background:#d6d6d6"></div>
<div style="position:absolute;left:1224px;top:411px;width:1px;height:527px;background:#d6d6d6"></div>
<div style="position:absolute;left:1344px;top:411px;width:1px;height:527px;background:#d6d6d6"></div>
<div style="position:absolute;left:91px;top:418px;width:11px;height:11px;border:1px solid #7a7a7a;background:#fff"><div style="position:absolute;left:1px;top:1px;width:7px;height:7px;border:1px solid #c4c8d2;background:linear-gradient(135deg,#cfd3de,#f6f6f6)"></div></div>
<div style="position:absolute;left:253px;top:421px;font:12.3px/12px 'Liberation Sans', sans-serif;color:#3a3a3a;white-space:nowrap;letter-spacing:-0.6px">STK00001</div>
<div style="position:absolute;left:333px;top:422px;font:12.3px/12px 'Liberation Sans', sans-serif;color:#3a3a3a;white-space:nowrap;letter-spacing:-0.2px">Writing English 6</div>
<div style="position:absolute;left:595px;top:422px;font:12.3px/12px 'Liberation Sans', sans-serif;color:#3a3a3a;white-space:nowrap;letter-spacing:-0.2px">Nguyễn Quốc Tuấn</div>
<div style="position:absolute;left:755px;top:422px;font:12.3px/12px 'Liberation Sans', sans-serif;color:#3a3a3a;white-space:nowrap;letter-spacing:-0.2px">Kim Đồng</div>
<div style="position:absolute;left:1232px;top:422px;font:12.3px/12px 'Liberation Sans', sans-serif;color:#3a3a3a;white-space:nowrap;letter-spacing:-0.2px">001</div>
<div style="position:absolute;right:403px;top:422px;font:12.3px/12px 'Liberation Sans', sans-serif;color:#3a3a3a;white-space:nowrap;letter-spacing:-0.2px">2015</div>
<div style="position:absolute;right:318px;top:422px;font:12.3px/12px 'Liberation Sans', sans-serif;color:#3a3a3a;white-space:nowrap;letter-spacing:-0.2px">35.000</div>
<svg width="15" height="16" viewBox="0 0 15 16" style="position:absolute;left:1355px;top:418px">
<defs><linearGradient id="cg" x1="0" y1="0" x2="0.3" y2="1"><stop offset="0" stop-color="#eef6fe"/><stop offset="1" stop-color="#a6d0f4"/></linearGradient></defs>
<path d="M4.5 0.6 H10.8 L13.6 3.4 V10.4 H4.5 Z" fill="url(#cg)" stroke="#2b97de" stroke-width="1.1"/>
<path d="M10.8 0.6 V3.4 H13.6" fill="#fff" stroke="#2b97de" stroke-width="0.6"/>
<path d="M0.6 4.6 H7 L9.6 7.2 V14.6 H0.6 Z" fill="url(#cg)" stroke="#2b97de" stroke-width="1.1"/>
<path d="M7 4.6 V7.2 H9.6" fill="#fff" stroke="#2b97de" stroke-width="0.6"/>
</svg>
<div style="position:absolute;left:91px;top:449px;width:11px;height:11px;border:1px solid #7a7a7a;background:#fff"><div style="position:absolute;left:1px;top:1px;width:7px;height:7px;border:1px solid #c4c8d2;background:linear-gradient(135deg,#cfd3de,#f6f6f6)"></div></div>
<div style="position:absolute;left:253px;top:452px;font:12.3px/12px 'Liberation Sans', sans-serif;color:#3a3a3a;white-space:nowrap;letter-spacing:-0.6px">STK00002</div>
<div style="position:absolute;left:333px;top:453px;font:12.3px/12px 'Liberation Sans', sans-serif;color:#3a3a3a;white-space:nowrap;letter-spacing:-0.2px">Writing English 7</div>
<div style="position:absolute;left:595px;top:453px;font:12.3px/12px 'Liberation Sans', sans-serif;color:#3a3a3a;white-space:nowrap;letter-spacing:-0.2px">Nguyễn Lan Chi</div>
<div style="position:absolute;left:755px;top:453px;font:12.3px/12px 'Liberation Sans', sans-serif;color:#3a3a3a;white-space:nowrap;letter-spacing:-0.2px">Kim Đồng</div>
<div style="position:absolute;left:1232px;top:453px;font:12.3px/12px 'Liberation Sans', sans-serif;color:#3a3a3a;white-space:nowrap;letter-spacing:-0.2px">001</div>
<div style="position:absolute;right:403px;top:453px;font:12.3px/12px 'Liberation Sans', sans-serif;color:#3a3a3a;white-space:nowrap;letter-spacing:-0.2px">2015</div>
<div style="position:absolute;right:318px;top:453px;font:12.3px/12px 'Liberation Sans', sans-serif;color:#3a3a3a;white-space:nowrap;letter-spacing:-0.2px">35.000</div>
<svg width="15" height="16" viewBox="0 0 15 16" style="position:absolute;left:1355px;top:449px">
<defs><linearGradient id="cg" x1="0" y1="0" x2="0.3" y2="1"><stop offset="0" stop-color="#eef6fe"/><stop offset="1" stop-color="#a6d0f4"/></linearGradient></defs>
<path d="M4.5 0.6 H10.8 L13.6 3.4 V10.4 H4.5 Z" fill="url(#cg)" stroke="#2b97de" stroke-width="1.1"/>
<path d="M10.8 0.6 V3.4 H13.6" fill="#fff" stroke="#2b97de" stroke-width="0.6"/>
<path d="M0.6 4.6 H7 L9.6 7.2 V14.6 H0.6 Z" fill="url(#cg)" stroke="#2b97de" stroke-width="1.1"/>
<path d="M7 4.6 V7.2 H9.6" fill="#fff" stroke="#2b97de" stroke-width="0.6"/>
</svg>
<div style="position:absolute;left:91px;top:480px;width:11px;height:11px;border:1px solid #7a7a7a;background:#fff"><div style="position:absolute;left:1px;top:1px;width:7px;height:7px;border:1px solid #c4c8d2;background:linear-gradient(135deg,#cfd3de,#f6f6f6)"></div></div>
<div style="position:absolute;left:253px;top:483px;font:12.3px/12px 'Liberation Sans', sans-serif;color:#3a3a3a;white-space:nowrap;letter-spacing:-0.6px">STK00003</div>
<div style="position:absolute;left:333px;top:484px;font:12.3px/12px 'Liberation Sans', sans-serif;color:#3a3a3a;white-space:nowrap;letter-spacing:-0.2px">Writing English 8</div>
<div style="position:absolute;left:595px;top:484px;font:12.3px/12px 'Liberation Sans', sans-serif;color:#3a3a3a;white-space:nowrap;letter-spacing:-0.2px">Trần Ngọc Khánh</div>
<div style="position:absolute;left:755px;top:484px;font:12.3px/12px 'Liberation Sans', sans-serif;color:#3a3a3a;white-space:nowrap;letter-spacing:-0.2px">Kim Đồng</div>
<div style="position:absolute;left:1232px;top:484px;font:12.3px/12px 'Liberation Sans', sans-serif;color:#3a3a3a;white-space:nowrap;letter-spacing:-0.2px">002</div>
<div style="position:absolute;right:403px;top:484px;font:12.3px/12px 'Liberation Sans', sans-serif;color:#3a3a3a;white-space:nowrap;letter-spacing:-0.2px">2015</div>
<div style="position:absolute;right:318px;top:484px;font:12.3px/12px 'Liberation Sans', sans-serif;color:#3a3a3a;white-space:nowrap;letter-spacing:-0.2px">35.000</div>
<svg width="15" height="16" viewBox="0 0 15 16" style="position:absolute;left:1355px;top:480px">
<defs><linearGradient id="cg" x1="0" y1="0" x2="0.3" y2="1"><stop offset="0" stop-color="#eef6fe"/><stop offset="1" stop-color="#a6d0f4"/></linearGradient></defs>
<path d="M4.5 0.6 H10.8 L13.6 3.4 V10.4 H4.5 Z" fill="url(#cg)" stroke="#2b97de" stroke-width="1.1"/>
<path d="M10.8 0.6 V3.4 H13.6" fill="#fff" stroke="#2b97de" stroke-width="0.6"/>
<path d="M0.6 4.6 H7 L9.6 7.2 V14.6 H0.6 Z" fill="url(#cg)" stroke="#2b97de" stroke-width="1.1"/>
<path d="M7 4.6 V7.2 H9.6" fill="#fff" stroke="#2b97de" stroke-width="0.6"/>
</svg>
<div style="position:absolute;left:91px;top:511px;width:11px;height:11px;border:1px solid #7a7a7a;background:#fff"><div style="position:absolute;left:1px;top:1px;width:7px;height:7px;border:1px solid #c4c8d2;background:linear-gradient(135deg,#cfd3de,#f6f6f6)"></div></div>
<div style="position:absolute;left:253px;top:514px;font:12.3px/12px 'Liberation Sans', sans-serif;color:#3a3a3a;white-space:nowrap;letter-spacing:-0.6px">STK00004</div>
<div style="position:absolute;left:333px;top:515px;font:12.3px/12px 'Liberation Sans', sans-serif;color:#3a3a3a;white-space:nowrap;letter-spacing:-0.2px">Writing English 9</div>
<div style="position:absolute;left:595px;top:515px;font:12.3px/12px 'Liberation Sans', sans-serif;color:#3a3a3a;white-space:nowrap;letter-spacing:-0.2px">Trần Ngọc Khánh</div>
<div style="position:absolute;left:755px;top:515px;font:12.3px/12px 'Liberation Sans', sans-serif;color:#3a3a3a;white-space:nowrap;letter-spacing:-0.2px">Kim Đồng</div>
<div style="position:absolute;left:1232px;top:515px;font:12.3px/12px 'Liberation Sans', sans-serif;color:#3a3a3a;white-space:nowrap;letter-spacing:-0.2px">003</div>
<div style="position:absolute;right:403px;top:515px;font:12.3px/12px 'Liberation Sans', sans-serif;color:#3a3a3a;white-space:nowrap;letter-spacing:-0.2px">2015</div>
<div style="position:absolute;right:318px;top:515px;font:12.3px/12px 'Liberation Sans', sans-serif;color:#3a3a3a;white-space:nowrap;letter-spacing:-0.2px">35.000</div>
<svg width="15" height="16" viewBox="0 0 15 16" style="position:absolute;left:1355px;top:511px">
<defs><linearGradient id="cg" x1="0" y1="0" x2="0.3" y2="1"><stop offset="0" stop-color="#eef6fe"/><stop offset="1" stop-color="#a6d0f4"/></linearGradient></defs>
<path d="M4.5 0.6 H10.8 L13.6 3.4 V10.4 H4.5 Z" fill="url(#cg)" stroke="#2b97de" stroke-width="1.1"/>
<path d="M10.8 0.6 V3.4 H13.6" fill="#fff" stroke="#2b97de" stroke-width="0.6"/>
<path d="M0.6 4.6 H7 L9.6 7.2 V14.6 H0.6 Z" fill="url(#cg)" stroke="#2b97de" stroke-width="1.1"/>
<path d="M7 4.6 V7.2 H9.6" fill="#fff" stroke="#2b97de" stroke-width="0.6"/>
</svg>
<div style="position:absolute;left:91px;top:542px;width:11px;height:11px;border:1px solid #7a7a7a;background:#fff"><div style="position:absolute;left:1px;top:1px;width:7px;height:7px;border:1px solid #c4c8d2;background:linear-gradient(135deg,#cfd3de,#f6f6f6)"></div></div>
<div style="position:absolute;left:253px;top:545px;font:12.3px/12px 'Liberation Sans', sans-serif;color:#3a3a3a;white-space:nowrap;letter-spacing:-0.6px">STK00005</div>
<div style="position:absolute;left:333px;top:546px;font:12.3px/12px 'Liberation Sans', sans-serif;color:#3a3a3a;white-space:nowrap;letter-spacing:-0.2px">Ôn luyện theo chuẩn kiến thức, kĩ năng Toán...</div>
<div style="position:absolute;left:595px;top:546px;font:12.3px/12px 'Liberation Sans', sans-serif;color:#3a3a3a;white-space:nowrap;letter-spacing:-0.2px">Nguyễn Đức Tấn</div>
<div style="position:absolute;left:755px;top:546px;font:12.3px/12px 'Liberation Sans', sans-serif;color:#3a3a3a;white-space:nowrap;letter-spacing:-0.2px">Kim Đồng</div>
<div style="position:absolute;left:1232px;top:546px;font:12.3px/12px 'Liberation Sans', sans-serif;color:#3a3a3a;white-space:nowrap;letter-spacing:-0.2px">004</div>
<div style="position:absolute;right:403px;top:546px;font:12.3px/12px 'Liberation Sans', sans-serif;color:#3a3a3a;white-space:nowrap;letter-spacing:-0.2px">2015</div>
<div style="position:absolute;right:318px;top:546px;font:12.3px/12px 'Liberation Sans', sans-serif;color:#3a3a3a;white-space:nowrap;letter-spacing:-0.2px">35.000</div>
<svg width="15" height="16" viewBox="0 0 15 16" style="position:absolute;left:1355px;top:542px">
<defs><linearGradient id="cg" x1="0" y1="0" x2="0.3" y2="1"><stop offset="0" stop-color="#eef6fe"/><stop offset="1" stop-color="#a6d0f4"/></linearGradient></defs>
<path d="M4.5 0.6 H10.8 L13.6 3.4 V10.4 H4.5 Z" fill="url(#cg)" stroke="#2b97de" stroke-width="1.1"/>
<path d="M10.8 0.6 V3.4 H13.6" fill="#fff" stroke="#2b97de" stroke-width="0.6"/>
<path d="M0.6 4.6 H7 L9.6 7.2 V14.6 H0.6 Z" fill="url(#cg)" stroke="#2b97de" stroke-width="1.1"/>
<path d="M7 4.6 V7.2 H9.6" fill="#fff" stroke="#2b97de" stroke-width="0.6"/>
</svg>
<div style="position:absolute;left:91px;top:573px;width:11px;height:11px;border:1px solid #7a7a7a;background:#fff"><div style="position:absolute;left:1px;top:1px;width:7px;height:7px;border:1px solid #c4c8d2;background:linear-gradient(135deg,#cfd3de,#f6f6f6)"></div></div>
<div style="position:absolute;left:253px;top:576px;font:12.3px/12px 'Liberation Sans', sans-serif;color:#3a3a3a;white-space:nowrap;letter-spacing:-0.6px">STK00006</div>
<div style="position:absolute;left:333px;top:577px;font:12.3px/12px 'Liberation Sans', sans-serif;color:#3a3a3a;white-space:nowrap;letter-spacing:-0.2px">Ôn luyện theo chuẩn kiến thức, kĩ năng Toán...</div>
<div style="position:absolute;left:595px;top:577px;font:12.3px/12px 'Liberation Sans', sans-serif;color:#3a3a3a;white-space:nowrap;letter-spacing:-0.2px">Nguyễn Đức Tấn</div>
<div style="position:absolute;left:755px;top:577px;font:12.3px/12px 'Liberation Sans', sans-serif;color:#3a3a3a;white-space:nowrap;letter-spacing:-0.2px">Kim Đồng</div>
<div style="position:absolute;left:1232px;top:577px;font:12.3px/12px 'Liberation Sans', sans-serif;color:#3a3a3a;white-space:nowrap;letter-spacing:-0.2px">005</div>
<div style="position:absolute;right:403px;top:577px;font:12.3px/12px 'Liberation Sans', sans-serif;color:#3a3a3a;white-space:nowrap;letter-spacing:-0.2px">2015</div>
<div style="position:absolute;right:318px;top:577px;font:12.3px/12px 'Liberation Sans', sans-serif;color:#3a3a3a;white-space:nowrap;letter-spacing:-0.2px">35.000</div>
<svg width="15" height="16" viewBox="0 0 15 16" style="position:absolute;left:1355px;top:573px">
<defs><linearGradient id="cg" x1="0" y1="0" x2="0.3" y2="1"><stop offset="0" stop-color="#eef6fe"/><stop offset="1" stop-color="#a6d0f4"/></linearGradient></defs>
<path d="M4.5 0.6 H10.8 L13.6 3.4 V10.4 H4.5 Z" fill="url(#cg)" stroke="#2b97de" stroke-width="1.1"/>
<path d="M10.8 0.6 V3.4 H13.6" fill="#fff" stroke="#2b97de" stroke-width="0.6"/>
<path d="M0.6 4.6 H7 L9.6 7.2 V14.6 H0.6 Z" fill="url(#cg)" stroke="#2b97de" stroke-width="1.1"/>
<path d="M7 4.6 V7.2 H9.6" fill="#fff" stroke="#2b97de" stroke-width="0.6"/>
</svg>
<div style="position:absolute;left:91px;top:604px;width:11px;height:11px;border:1px solid #7a7a7a;background:#fff"><div style="position:absolute;left:1px;top:1px;width:7px;height:7px;border:1px solid #c4c8d2;background:linear-gradient(135deg,#cfd3de,#f6f6f6)"></div></div>
<div style="position:absolute;left:253px;top:607px;font:12.3px/12px 'Liberation Sans', sans-serif;color:#3a3a3a;white-space:nowrap;letter-spacing:-0.6px">STK00007</div>
<div style="position:absolute;left:333px;top:608px;font:12.3px/12px 'Liberation Sans', sans-serif;color:#3a3a3a;white-space:nowrap;letter-spacing:-0.2px">Ôn luyện theo chuẩn kiến thức, kĩ năng Toán...</div>
<div style="position:absolute;left:595px;top:608px;font:12.3px/12px 'Liberation Sans', sans-serif;color:#3a3a3a;white-space:nowrap;letter-spacing:-0.2px">Nguyễn Đức Tấn</div>
<div style="position:absolute;left:755px;top:608px;font:12.3px/12px 'Liberation Sans', sans-serif;color:#3a3a3a;white-space:nowrap;letter-spacing:-0.2px">Kim Đồng</div>
<div style="position:absolute;left:1232px;top:608px;font:12.3px/12px 'Liberation Sans', sans-serif;color:#3a3a3a;white-space:nowrap;letter-spacing:-0.2px">006</div>
<div style="position:absolute;right:403px;top:608px;font:12.3px/12px 'Liberation Sans', sans-serif;color:#3a3a3a;white-space:nowrap;letter-spacing:-0.2px">2015</div>
<div style="position:absolute;right:318px;top:608px;font:12.3px/12px 'Liberation Sans', sans-serif;color:#3a3a3a;white-space:nowrap;letter-spacing:-0.2px">35.000</div>
<svg width="15" height="16" viewBox="0 0 15 16" style="position:absolute;left:1355px;top:604px">
<defs><linearGradient id="cg" x1="0" y1="0" x2="0.3" y2="1"><stop offset="0" stop-color="#eef6fe"/><stop offset="1" stop-color="#a6d0f4"/></linearGradient></defs>
<path d="M4.5 0.6 H10.8 L13.6 3.4 V10.4 H4.5 Z" fill="url(#cg)" stroke="#2b97de" stroke-width="1.1"/>
<path d="M10.8 0.6 V3.4 H13.6" fill="#fff" stroke="#2b97de" stroke-width="0.6"/>
<path d="M0.6 4.6 H7 L9.6 7.2 V14.6 H0.6 Z" fill="url(#cg)" stroke="#2b97de" stroke-width="1.1"/>
<path d="M7 4.6 V7.2 H9.6" fill="#fff" stroke="#2b97de" stroke-width="0.6"/>
</svg>
<div style="position:absolute;left:91px;top:635px;width:11px;height:11px;border:1px solid #7a7a7a;background:#fff"><div style="position:absolute;left:1px;top:1px;width:7px;height:7px;border:1px solid #c4c8d2;background:linear-gradient(135deg,#cfd3de,#f6f6f6)"></div></div>
<div style="position:absolute;left:253px;top:638px;font:12.3px/12px 'Liberation Sans', sans-serif;color:#3a3a3a;white-space:nowrap;letter-spacing:-0.6px">STK00008</div>
<div style="position:absolute;left:333px;top:639px;font:12.3px/12px 'Liberation Sans', sans-serif;color:#3a3a3a;white-space:nowrap;letter-spacing:-0.2px">Ôn luyện theo chuẩn kiến thức, kĩ năng Toán...</div>
<div style="position:absolute;left:595px;top:639px;font:12.3px/12px 'Liberation Sans', sans-serif;color:#3a3a3a;white-space:nowrap;letter-spacing:-0.2px">Nguyễn Đức Tấn</div>
<div style="position:absolute;left:755px;top:639px;font:12.3px/12px 'Liberation Sans', sans-serif;color:#3a3a3a;white-space:nowrap;letter-spacing:-0.2px">Kim Đồng</div>
<div style="position:absolute;left:1232px;top:639px;font:12.3px/12px 'Liberation Sans', sans-serif;color:#3a3a3a;white-space:nowrap;letter-spacing:-0.2px">007</div>
<div style="position:absolute;right:403px;top:639px;font:12.3px/12px 'Liberation Sans', sans-serif;color:#3a3a3a;white-space:nowrap;letter-spacing:-0.2px">2015</div>
<div style="position:absolute;right:318px;top:639px;font:12.3px/12px 'Liberation Sans', sans-serif;color:#3a3a3a;white-space:nowrap;letter-spacing:-0.2px">35.000</div>
<svg width="15" height="16" viewBox="0 0 15 16" style="position:absolute;left:1355px;top:635px">
<defs><linearGradient id="cg" x1="0" y1="0" x2="0.3" y2="1"><stop offset="0" stop-color="#eef6fe"/><stop offset="1" stop-color="#a6d0f4"/></linearGradient></defs>
<path d="M4.5 0.6 H10.8 L13.6 3.4 V10.4 H4.5 Z" fill="url(#cg)" stroke="#2b97de" stroke-width="1.1"/>
<path d="M10.8 0.6 V3.4 H13.6" fill="#fff" stroke="#2b97de" stroke-width="0.6"/>
<path d="M0.6 4.6 H7 L9.6 7.2 V14.6 H0.6 Z" fill="url(#cg)" stroke="#2b97de" stroke-width="1.1"/>
<path d="M7 4.6 V7.2 H9.6" fill="#fff" stroke="#2b97de" stroke-width="0.6"/>
</svg>
<div style="position:absolute;left:91px;top:666px;width:11px;height:11px;border:1px solid #7a7a7a;background:#fff"><div style="position:absolute;left:1px;top:1px;width:7px;height:7px;border:1px solid #c4c8d2;background:linear-gradient(135deg,#cfd3de,#f6f6f6)"></div></div>
<div style="position:absolute;left:253px;top:669px;font:12.3px/12px 'Liberation Sans', sans-serif;color:#3a3a3a;white-space:nowrap;letter-spacing:-0.6px">STK00009</div>
<div style="position:absolute;left:333px;top:670px;font:12.3px/12px 'Liberation Sans', sans-serif;color:#3a3a3a;white-space:nowrap;letter-spacing:-0.2px">Ôn luyện theo chuẩn kiến thức, kĩ năng Toán...</div>
<div style="position:absolute;left:595px;top:670px;font:12.3px/12px 'Liberation Sans', sans-serif;color:#3a3a3a;white-space:nowrap;letter-spacing:-0.2px">Nguyễn Đức Tấn</div>
<div style="position:absolute;left:755px;top:670px;font:12.3px/12px 'Liberation Sans', sans-serif;color:#3a3a3a;white-space:nowrap;letter-spacing:-0.2px">Kim Đồng</div>
<div style="position:absolute;left:1232px;top:670px;font:12.3px/12px 'Liberation Sans', sans-serif;color:#3a3a3a;white-space:nowrap;letter-spacing:-0.2px">008</div>
<div style="position:absolute;right:403px;top:670px;font:12.3px/12px 'Liberation Sans', sans-serif;color:#3a3a3a;white-space:nowrap;letter-spacing:-0.2px">2015</div>
<div style="position:absolute;right:318px;top:670px;font:12.3px/12px 'Liberation Sans', sans-serif;color:#3a3a3a;white-space:nowrap;letter-spacing:-0.2px">35.000</div>
<svg width="15" height="16" viewBox="0 0 15 16" style="position:absolute;left:1355px;top:666px">
<defs><linearGradient id="cg" x1="0" y1="0" x2="0.3" y2="1"><stop offset="0" stop-color="#eef6fe"/><stop offset="1" stop-color="#a6d0f4"/></linearGradient></defs>
<path d="M4.5 0.6 H10.8 L13.6 3.4 V10.4 H4.5 Z" fill="url(#cg)" stroke="#2b97de" stroke-width="1.1"/>
<path d="M10.8 0.6 V3.4 H13.6" fill="#fff" stroke="#2b97de" stroke-width="0.6"/>
<path d="M0.6 4.6 H7 L9.6 7.2 V14.6 H0.6 Z" fill="url(#cg)" stroke="#2b97de" stroke-width="1.1"/>
<path d="M7 4.6 V7.2 H9.6" fill="#fff" stroke="#2b97de" stroke-width="0.6"/>
</svg>
<div style="position:absolute;left:91px;top:697px;width:11px;height:11px;border:1px solid #7a7a7a;background:#fff"><div style="position:absolute;left:1px;top:1px;width:7px;height:7px;border:1px solid #c4c8d2;background:linear-gradient(135deg,#cfd3de,#f6f6f6)"></div></div>
<div style="position:absolute;left:253px;top:700px;font:12.3px/12px 'Liberation Sans', sans-serif;color:#3a3a3a;white-space:nowrap;letter-spacing:-0.6px">STK00010</div>
<div style="position:absolute;left:333px;top:701px;font:12.3px/12px 'Liberation Sans', sans-serif;color:#3a3a3a;white-space:nowrap;letter-spacing:-0.2px">Ôn luyện theo chuẩn kiến thức, kĩ năng Toán...</div>
<div style="position:absolute;left:595px;top:701px;font:12.3px/12px 'Liberation Sans', sans-serif;color:#3a3a3a;white-space:nowrap;letter-spacing:-0.2px">Nguyễn Đức Tấn</div>
<div style="position:absolute;left:755px;top:701px;font:12.3px/12px 'Liberation Sans', sans-serif;color:#3a3a3a;white-space:nowrap;letter-spacing:-0.2px">Kim Đồng</div>
<div style="position:absolute;left:1232px;top:701px;font:12.3px/12px 'Liberation Sans', sans-serif;color:#3a3a3a;white-space:nowrap;letter-spacing:-0.2px">009</div>
<div style="position:absolute;right:403px;top:701px;font:12.3px/12px 'Liberation Sans', sans-serif;color:#3a3a3a;white-space:nowrap;letter-spacing:-0.2px">2015</div>
<div style="position:absolute;right:318px;top:701px;font:12.3px/12px 'Liberation Sans', sans-serif;color:#3a3a3a;white-space:nowrap;letter-spacing:-0.2px">35.000</div>
<svg width="15" height="16" viewBox="0 0 15 16" style="position:absolute;left:1355px;top:697px">
<defs><linearGradient id="cg" x1="0" y1="0" x2="0.3" y2="1"><stop offset="0" stop-color="#eef6fe"/><stop offset="1" stop-color="#a6d0f4"/></linearGradient></defs>
<path d="M4.5 0.6 H10.8 L13.6 3.4 V10.4 H4.5 Z" fill="url(#cg)" stroke="#2b97de" stroke-width="1.1"/>
<path d="M10.8 0.6 V3.4 H13.6" fill="#fff" stroke="#2b97de" stroke-width="0.6"/>
<path d="M0.6 4.6 H7 L9.6 7.2 V14.6 H0.6 Z" fill="url(#cg)" stroke="#2b97de" stroke-width="1.1"/>
<path d="M7 4.6 V7.2 H9.6" fill="#fff" stroke="#2b97de" stroke-width="0.6"/>
</svg>
<div style="position:absolute;left:91px;top:728px;width:11px;height:11px;border:1px solid #7a7a7a;background:#fff"><div style="position:absolute;left:1px;top:1px;width:7px;height:7px;border:1px solid #c4c8d2;background:linear-gradient(135deg,#cfd3de,#f6f6f6)"></div></div>
<div style="position:absolute;left:253px;top:731px;font:12.3px/12px 'Liberation Sans', sans-serif;color:#3a3a3a;white-space:nowrap;letter-spacing:-0.6px">STK00011</div>
<div style="position:absolute;left:333px;top:732px;font:12.3px/12px 'Liberation Sans', sans-serif;color:#3a3a3a;white-space:nowrap;letter-spacing:-0.2px">Ôn luyện theo chuẩn kiến thức, kĩ năng Toán...</div>
<div style="position:absolute;left:595px;top:732px;font:12.3px/12px 'Liberation Sans', sans-serif;color:#3a3a3a;white-space:nowrap;letter-spacing:-0.2px">Nguyễn Đức Tấn</div>
<div style="position:absolute;left:755px;top:732px;font:12.3px/12px 'Liberation Sans', sans-serif;color:#3a3a3a;white-space:nowrap;letter-spacing:-0.2px">Kim Đồng</div>
<div style="position:absolute;left:1232px;top:732px;font:12.3px/12px 'Liberation Sans', sans-serif;color:#3a3a3a;white-space:nowrap;letter-spacing:-0.2px">010</div>
<div style="position:absolute;right:403px;top:732px;font:12.3px/12px 'Liberation Sans', sans-serif;color:#3a3a3a;white-space:nowrap;letter-spacing:-0.2px">2015</div>
<div style="position:absolute;right:318px;top:732px;font:12.3px/12px 'Liberation Sans', sans-serif;color:#3a3a3a;white-space:nowrap;letter-spacing:-0.2px">35.000</div>
<svg width="15" height="16" viewBox="0 0 15 16" style="position:absolute;left:1355px;top:728px">
<defs><linearGradient id="cg" x1="0" y1="0" x2="0.3" y2="1"><stop offset="0" stop-color="#eef6fe"/><stop offset="1" stop-color="#a6d0f4"/></linearGradient></defs>
<path d="M4.5 0.6 H10.8 L13.6 3.4 V10.4 H4.5 Z" fill="url(#cg)" stroke="#2b97de" stroke-width="1.1"/>
<path d="M10.8 0.6 V3.4 H13.6" fill="#fff" stroke="#2b97de" stroke-width="0.6"/>
<path d="M0.6 4.6 H7 L9.6 7.2 V14.6 H0.6 Z" fill="url(#cg)" stroke="#2b97de" stroke-width="1.1"/>
<path d="M7 4.6 V7.2 H9.6" fill="#fff" stroke="#2b97de" stroke-width="0.6"/>
</svg>
<div style="position:absolute;left:91px;top:759px;width:11px;height:11px;border:1px solid #7a7a7a;background:#fff"><div style="position:absolute;left:1px;top:1px;width:7px;height:7px;border:1px solid #c4c8d2;background:linear-gradient(135deg,#cfd3de,#f6f6f6)"></div></div>
<div style="position:absolute;left:253px;top:762px;font:12.3px/12px 'Liberation Sans', sans-serif;color:#3a3a3a;white-space:nowrap;letter-spacing:-0.6px">STK00012</div>
<div style="position:absolute;left:333px;top:763px;font:12.3px/12px 'Liberation Sans', sans-serif;color:#3a3a3a;white-space:nowrap;letter-spacing:-0.2px">Ôn luyện theo chuẩn kiến thức, kĩ năng Toán...</div>
<div style="position:absolute;left:595px;top:763px;font:12.3px/12px 'Liberation Sans', sans-serif;color:#3a3a3a;white-space:nowrap;letter-spacing:-0.2px">Nguyễn Đức Tấn</div>
<div style="position:absolute;left:755px;top:763px;font:12.3px/12px 'Liberation Sans', sans-serif;color:#3a3a3a;white-space:nowrap;letter-spacing:-0.2px">Kim Đồng</div>
<div style="position:absolute;left:1232px;top:763px;font:12.3px/12px 'Liberation Sans', sans-serif;color:#3a3a3a;white-space:nowrap;letter-spacing:-0.2px">011</div>
<div style="position:absolute;right:403px;top:763px;font:12.3px/12px 'Liberation Sans', sans-serif;color:#3a3a3a;white-space:nowrap;letter-spacing:-0.2px">2015</div>
<div style="position:absolute;right:318px;top:763px;font:12.3px/12px 'Liberation Sans', sans-serif;color:#3a3a3a;white-space:nowrap;letter-spacing:-0.2px">35.000</div>
<svg width="15" height="16" viewBox="0 0 15 16" style="position:absolute;left:1355px;top:759px">
<defs><linearGradient id="cg" x1="0" y1="0" x2="0.3" y2="1"><stop offset="0" stop-color="#eef6fe"/><stop offset="1" stop-color="#a6d0f4"/></linearGradient></defs>
<path d="M4.5 0.6 H10.8 L13.6 3.4 V10.4 H4.5 Z" fill="url(#cg)" stroke="#2b97de" stroke-width="1.1"/>
<path d="M10.8 0.6 V3.4 H13.6" fill="#fff" stroke="#2b97de" stroke-width="0.6"/>
<path d="M0.6 4.6 H7 L9.6 7.2 V14.6 H0.6 Z" fill="url(#cg)" stroke="#2b97de" stroke-width="1.1"/>
<path d="M7 4.6 V7.2 H9.6" fill="#fff" stroke="#2b97de" stroke-width="0.6"/>
</svg>
<div style="position:absolute;left:91px;top:790px;width:11px;height:11px;border:1px solid #7a7a7a;background:#fff"><div style="position:absolute;left:1px;top:1px;width:7px;height:7px;border:1px solid #c4c8d2;background:linear-gradient(135deg,#cfd3de,#f6f6f6)"></div></div>
<div style="position:absolute;left:253px;top:793px;font:12.3px/12px 'Liberation Sans', sans-serif;color:#3a3a3a;white-space:nowrap;letter-spacing:-0.6px">STK00013</div>
<div style="position:absolute;left:333px;top:794px;font:12.3px/12px 'Liberation Sans', sans-serif;color:#3a3a3a;white-space:nowrap;letter-spacing:-0.2px">Ôn luyện theo chuẩn kiến thức, kĩ năng Hóa ...</div>
<div style="position:absolute;left:595px;top:794px;font:12.3px/12px 'Liberation Sans', sans-serif;color:#3a3a3a;white-space:nowrap;letter-spacing:-0.2px">Huỳnh Văn út</div>
<div style="position:absolute;left:755px;top:794px;font:12.3px/12px 'Liberation Sans', sans-serif;color:#3a3a3a;white-space:nowrap;letter-spacing:-0.2px">Kim Đồng</div>
<div style="position:absolute;left:1232px;top:794px;font:12.3px/12px 'Liberation Sans', sans-serif;color:#3a3a3a;white-space:nowrap;letter-spacing:-0.2px">012</div>
<div style="position:absolute;right:403px;top:794px;font:12.3px/12px 'Liberation Sans', sans-serif;color:#3a3a3a;white-space:nowrap;letter-spacing:-0.2px">2015</div>
<div style="position:absolute;right:318px;top:794px;font:12.3px/12px 'Liberation Sans', sans-serif;color:#3a3a3a;white-space:nowrap;letter-spacing:-0.2px">35.000</div>
<svg width="15" height="16" viewBox="0 0 15 16" style="position:absolute;left:1355px;top:790px">
<defs><linearGradient id="cg" x1="0" y1="0" x2="0.3" y2="1"><stop offset="0" stop-color="#eef6fe"/><stop offset="1" stop-color="#a6d0f4"/></linearGradient></defs>
<path d="M4.5 0.6 H10.8 L13.6 3.4 V10.4 H4.5 Z" fill="url(#cg)" stroke="#2b97de" stroke-width="1.1"/>
<path d="M10.8 0.6 V3.4 H13.6" fill="#fff" stroke="#2b97de" stroke-width="0.6"/>
<path d="M0.6 4.6 H7 L9.6 7.2 V14.6 H0.6 Z" fill="url(#cg)" stroke="#2b97de" stroke-width="1.1"/>
<path d="M7 4.6 V7.2 H9.6" fill="#fff" stroke="#2b97de" stroke-width="0.6"/>
</svg>
<div style="position:absolute;left:91px;top:821px;width:11px;height:11px;border:1px solid #7a7a7a;background:#fff"><div style="position:absolute;left:1px;top:1px;width:7px;height:7px;border:1px solid #c4c8d2;background:linear-gradient(135deg,#cfd3de,#f6f6f6)"></div></div>
<div style="position:absolute;left:253px;top:824px;font:12.3px/12px 'Liberation Sans', sans-serif;color:#3a3a3a;white-space:nowrap;letter-spacing:-0.6px">STK00014</div>
<div style="position:absolute;left:333px;top:825px;font:12.3px/12px 'Liberation Sans', sans-serif;color:#3a3a3a;white-space:nowrap;letter-spacing:-0.2px">Ôn luyện theo chuẩn kiến thức, kĩ năng Vật lí 6</div>
<div style="position:absolute;left:595px;top:825px;font:12.3px/12px 'Liberation Sans', sans-serif;color:#3a3a3a;white-space:nowrap;letter-spacing:-0.2px">Nguyễn Tuyến</div>
<div style="position:absolute;left:755px;top:825px;font:12.3px/12px 'Liberation Sans', sans-serif;color:#3a3a3a;white-space:nowrap;letter-spacing:-0.2px">Kim Đồng</div>
<div style="position:absolute;left:1232px;top:825px;font:12.3px/12px 'Liberation Sans', sans-serif;color:#3a3a3a;white-space:nowrap;letter-spacing:-0.2px">013</div>
<div style="position:absolute;right:403px;top:825px;font:12.3px/12px 'Liberation Sans', sans-serif;color:#3a3a3a;white-space:nowrap;letter-spacing:-0.2px">2015</div>
<div style="position:absolute;right:318px;top:825px;font:12.3px/12px 'Liberation Sans', sans-serif;color:#3a3a3a;white-space:nowrap;letter-spacing:-0.2px">35.000</div>
<svg width="15" height="16" viewBox="0 0 15 16" style="position:absolute;left:1355px;top:821px">
<defs><linearGradient id="cg" x1="0" y1="0" x2="0.3" y2="1"><stop offset="0" stop-color="#eef6fe"/><stop offset="1" stop-color="#a6d0f4"/></linearGradient></defs>
<path d="M4.5 0.6 H10.8 L13.6 3.4 V10.4 H4.5 Z" fill="url(#cg)" stroke="#2b97de" stroke-width="1.1"/>
<path d="M10.8 0.6 V3.4 H13.6" fill="#fff" stroke="#2b97de" stroke-width="0.6"/>
<path d="M0.6 4.6 H7 L9.6 7.2 V14.6 H0.6 Z" fill="url(#cg)" stroke="#2b97de" stroke-width="1.1"/>
<path d="M7 4.6 V7.2 H9.6" fill="#fff" stroke="#2b97de" stroke-width="0.6"/>
</svg>
<div style="position:absolute;left:91px;top:852px;width:11px;height:11px;border:1px solid #7a7a7a;background:#fff"><div style="position:absolute;left:1px;top:1px;width:7px;height:7px;border:1px solid #c4c8d2;background:linear-gradient(135deg,#cfd3de,#f6f6f6)"></div></div>
<div style="position:absolute;left:253px;top:855px;font:12.3px/12px 'Liberation Sans', sans-serif;color:#3a3a3a;white-space:nowrap;letter-spacing:-0.6px">STK00015</div>
<div style="position:absolute;left:333px;top:856px;font:12.3px/12px 'Liberation Sans', sans-serif;color:#3a3a3a;white-space:nowrap;letter-spacing:-0.2px">Ôn luyện theo chuẩn kiến thức, kĩ năng Vật lí 7</div>
<div style="position:absolute;left:595px;top:856px;font:12.3px/12px 'Liberation Sans', sans-serif;color:#3a3a3a;white-space:nowrap;letter-spacing:-0.2px">Nguyễn Tuyến</div>
<div style="position:absolute;left:755px;top:856px;font:12.3px/12px 'Liberation Sans', sans-serif;color:#3a3a3a;white-space:nowrap;letter-spacing:-0.2px">Kim Đồng</div>
<div style="position:absolute;left:1232px;top:856px;font:12.3px/12px 'Liberation Sans', sans-serif;color:#3a3a3a;white-space:nowrap;letter-spacing:-0.2px">014</div>
<div style="position:absolute;right:403px;top:856px;font:12.3px/12px 'Liberation Sans', sans-serif;color:#3a3a3a;white-space:nowrap;letter-spacing:-0.2px">2015</div>
<div style="position:absolute;right:318px;top:856px;font:12.3px/12px 'Liberation Sans', sans-serif;color:#3a3a3a;white-space:nowrap;letter-spacing:-0.2px">35.000</div>
<svg width="15" height="16" viewBox="0 0 15 16" style="position:absolute;left:1355px;top:852px">
<defs><linearGradient id="cg" x1="0" y1="0" x2="0.3" y2="1"><stop offset="0" stop-color="#eef6fe"/><stop offset="1" stop-color="#a6d0f4"/></linearGradient></defs>
<path d="M4.5 0.6 H10.8 L13.6 3.4 V10.4 H4.5 Z" fill="url(#cg)" stroke="#2b97de" stroke-width="1.1"/>
<path d="M10.8 0.6 V3.4 H13.6" fill="#fff" stroke="#2b97de" stroke-width="0.6"/>
<path d="M0.6 4.6 H7 L9.6 7.2 V14.6 H0.6 Z" fill="url(#cg)" stroke="#2b97de" stroke-width="1.1"/>
<path d="M7 4.6 V7.2 H9.6" fill="#fff" stroke="#2b97de" stroke-width="0.6"/>
</svg>
<div style="position:absolute;left:91px;top:883px;width:11px;height:11px;border:1px solid #7a7a7a;background:#fff"><div style="position:absolute;left:1px;top:1px;width:7px;height:7px;border:1px solid #c4c8d2;background:linear-gradient(135deg,#cfd3de,#f6f6f6)"></div></div>
<div style="position:absolute;left:253px;top:886px;font:12.3px/12px 'Liberation Sans', sans-serif;color:#3a3a3a;white-space:nowrap;letter-spacing:-0.6px">STK00016</div>
<div style="position:absolute;left:333px;top:887px;font:12.3px/12px 'Liberation Sans', sans-serif;color:#3a3a3a;white-space:nowrap;letter-spacing:-0.2px">Ôn luyện theo chuẩn kiến thức, kĩ năng Vật lí 8</div>
<div style="position:absolute;left:595px;top:887px;font:12.3px/12px 'Liberation Sans', sans-serif;color:#3a3a3a;white-space:nowrap;letter-spacing:-0.2px">Nguyễn Tuyến</div>
<div style="position:absolute;left:755px;top:887px;font:12.3px/12px 'Liberation Sans', sans-serif;color:#3a3a3a;white-space:nowrap;letter-spacing:-0.2px">Kim Đồng</div>
<div style="position:absolute;left:1232px;top:887px;font:12.3px/12px 'Liberation Sans', sans-serif;color:#3a3a3a;white-space:nowrap;letter-spacing:-0.2px">015</div>
<div style="position:absolute;right:403px;top:887px;font:12.3px/12px 'Liberation Sans', sans-serif;color:#3a3a3a;white-space:nowrap;letter-spacing:-0.2px">2015</div>
<div style="position:absolute;right:318px;top:887px;font:12.3px/12px 'Liberation Sans', sans-serif;color:#3a3a3a;white-space:nowrap;letter-spacing:-0.2px">35.000</div>
<svg width="15" height="16" viewBox="0 0 15 16" style="position:absolute;left:1355px;top:883px">
<defs><linearGradient id="cg" x1="0" y1="0" x2="0.3" y2="1"><stop offset="0" stop-color="#eef6fe"/><stop offset="1" stop-color="#a6d0f4"/></linearGradient></defs>
<path d="M4.5 0.6 H10.8 L13.6 3.4 V10.4 H4.5 Z" fill="url(#cg)" stroke="#2b97de" stroke-width="1.1"/>
<path d="M10.8 0.6 V3.4 H13.6" fill="#fff" stroke="#2b97de" stroke-width="0.6"/>
<path d="M0.6 4.6 H7 L9.6 7.2 V14.6 H0.6 Z" fill="url(#cg)" stroke="#2b97de" stroke-width="1.1"/>
<path d="M7 4.6 V7.2 H9.6" fill="#fff" stroke="#2b97de" stroke-width="0.6"/>
</svg>
<div style="position:absolute;left:91px;top:914px;width:11px;height:11px;border:1px solid #7a7a7a;background:#fff"><div style="position:absolute;left:1px;top:1px;width:7px;height:7px;border:1px solid #c4c8d2;background:linear-gradient(135deg,#cfd3de,#f6f6f6)"></div></div>
<div style="position:absolute;left:253px;top:917px;font:12.3px/12px 'Liberation Sans', sans-serif;color:#3a3a3a;white-space:nowrap;letter-spacing:-0.6px">STK00017</div>
<div style="position:absolute;left:333px;top:918px;font:12.3px/12px 'Liberation Sans', sans-serif;color:#3a3a3a;white-space:nowrap;letter-spacing:-0.2px">Ôn luyện theo chuẩn kiến thức, kĩ năng Vật lí 9</div>
<div style="position:absolute;left:595px;top:918px;font:12.3px/12px 'Liberation Sans', sans-serif;color:#3a3a3a;white-space:nowrap;letter-spacing:-0.2px">Nguyễn Tuyến</div>
<div style="position:absolute;left:755px;top:918px;font:12.3px/12px 'Liberation Sans', sans-serif;color:#3a3a3a;white-space:nowrap;letter-spacing:-0.2px">Kim Đồng</div>
<div style="position:absolute;left:1232px;top:918px;font:12.3px/12px 'Liberation Sans', sans-serif;color:#3a3a3a;white-space:nowrap;letter-spacing:-0.2px">016</div>
<div style="position:absolute;right:403px;top:918px;font:12.3px/12px 'Liberation Sans', sans-serif;color:#3a3a3a;white-space:nowrap;letter-spacing:-0.2px">2015</div>
<div style="position:absolute;right:318px;top:918px;font:12.3px/12px 'Liberation Sans', sans-serif;color:#3a3a3a;white-space:nowrap;letter-spacing:-0.2px">35.000</div>
<svg width="15" height="16" viewBox="0 0 15 16" style="position:absolute;left:1355px;top:914px">
<defs><linearGradient id="cg" x1="0" y1="0" x2="0.3" y2="1"><stop offset="0" stop-color="#eef6fe"/><stop offset="1" stop-color="#a6d0f4"/></linearGradient></defs>
<path d="M4.5 0.6 H10.8 L13.6 3.4 V10.4 H4.5 Z" fill="url(#cg)" stroke="#2b97de" stroke-width="1.1"/>
<path d="M10.8 0.6 V3.4 H13.6" fill="#fff" stroke="#2b97de" stroke-width="0.6"/>
<path d="M0.6 4.6 H7 L9.6 7.2 V14.6 H0.6 Z" fill="url(#cg)" stroke="#2b97de" stroke-width="1.1"/>
<path d="M7 4.6 V7.2 H9.6" fill="#fff" stroke="#2b97de" stroke-width="0.6"/>
</svg>
<div style="position:absolute;left:1380px;top:412px;width:17px;height:527px;background:#f0f0f0"></div>
<div style="position:absolute;left:1382px;top:429px;width:13px;height:168px;background:#c1c1c1"></div>
<div style="position:absolute;left:1385px;top:419px;width:0;height:0;border-left:4px solid transparent;border-right:4px solid transparent;border-bottom:4px solid #a3a3a3"></div>
<div style="position:absolute;left:1384px;top:929px;width:0;height:0;border-left:4px solid transparent;border-right:4px solid transparent;border-top:4px solid #454545"></div>
<div style="position:absolute;left:1345px;top:412px;width:33px;height:23px;border:3px solid #e84040"></div>
<div style="position:absolute;left:1349px;top:444px;width:61px;height:27px;border:1px solid #8ba6cc;border-radius:3px;background:#e9f2fd;box-shadow:1px 1px 2px rgba(0,0,0,0.15)"></div>
<div style="position:absolute;left:1356px;top:454px;font:12.4px/12px 'Liberation Sans', sans-serif;color:#333;letter-spacing:-0.3px;white-space:nowrap">Nhân bản</div>
<div style="position:absolute;left:81px;top:940px;width:1316px;height:29px;background:#f2f2f2;border-top:1px solid #cfcfcf"></div>
<svg width="12" height="12" style="position:absolute;left:87px;top:949px"><rect x="0" y="0" width="2" height="12" fill="#c5c5c5"/><path d="M10 0.5 V11.5 L3.5 6 Z" fill="#d2d2d2" stroke="#c0c0c0" stroke-width="0.6"/></svg>
<svg width="8" height="12" style="position:absolute;left:111px;top:949px"><path d="M7 0.5 V11.5 L0.5 6 Z" fill="#d2d2d2" stroke="#c0c0c0" stroke-width="0.6"/></svg>
<div style="position:absolute;left:129px;top:948px;width:1px;height:14px;background:#9cc3ee"></div>
<div style="position:absolute;left:137px;top:950px;font:12.2px/12px 'Liberation Sans', sans-serif;color:#444;letter-spacing:-0.45px;white-space:nowrap">Trang</div>
<div style="position:absolute;left:175px;top:944px;width:28px;height:21px;border:1px solid #d9d9d9;border-radius:2px;background:#fff"></div>
<div style="position:absolute;left:179px;top:950px;font:12.3px/12px 'Liberation Sans', sans-serif;color:#222;white-space:nowrap">1</div>
<div style="position:absolute;left:211px;top:950px;font:12.4px/12px 'Liberation Sans', sans-serif;color:#444;letter-spacing:-0.2px;white-space:nowrap">trên 8</div>
<div style="position:absolute;left:249px;top:948px;width:1px;height:14px;background:#9cc3ee"></div>
<svg width="8" height="12" style="position:absolute;left:260px;top:949px"><path d="M0.5 0.5 V11.5 L7 6 Z" fill="#2f7ddb"/></svg>
<svg width="12" height="12" style="position:absolute;left:283px;top:949px"><path d="M0.5 0.5 V11.5 L7 6 Z" fill="#2f7ddb"/><rect x="8" y="0" width="2.5" height="12" fill="#2f7ddb"/></svg>
<div style="position:absolute;left:301px;top:948px;width:1px;height:14px;background:#9cc3ee"></div>
<div style="position:absolute;left:305px;top:950px;font:12.4px/12px 'Liberation Sans', sans-serif;color:#444;letter-spacing:-0.2px;white-space:nowrap">Số bản ghi</div>
<div style="position:absolute;left:370px;top:944px;width:53px;height:20px;border:1px solid #d0d0d0;background:#fff"></div>
<div style="position:absolute;left:407px;top:945px;width:17px;height:20px;background:linear-gradient(#efefef,#d2d2d2);border-left:1px solid #c9c9c9"></div>
<svg width="9" height="6" style="position:absolute;left:411px;top:952px"><path d="M0.8 0.8 L4.5 4.5 L8.2 0.8" fill="none" stroke="#1f2a6b" stroke-width="1.8"/></svg>
<div style="position:absolute;left:374px;top:950px;font:12.3px/12px 'Liberation Sans', sans-serif;color:#222;white-space:nowrap">50</div>
<div style="position:absolute;right:27px;top:950px;font:12.2px/12px 'Liberation Sans', sans-serif;color:#444;white-space:nowrap">Hiển thị 1 - 50 trên 374 kết quả</div>
<svg width="1418" height="991" style="position:absolute;left:0;top:0;pointer-events:none">
<line x1="111.7" y1="133" x2="134.5" y2="238" stroke="#e84848" stroke-width="4.6"/>
<path d="M126.5 240.5 L140.5 236.5 L136.8 250.5 Z" fill="#e84848"/>
</svg>
</body></html>
